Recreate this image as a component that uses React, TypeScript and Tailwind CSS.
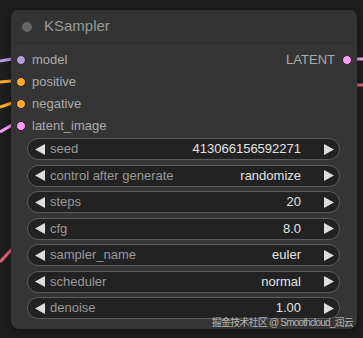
const INPUTS = [
  { name: "model", color: "bg-[#b39ddb]" },
  { name: "positive", color: "bg-[#ffa931]" },
  { name: "negative", color: "bg-[#ffa931]" },
  { name: "latent_image", color: "bg-[#ff9cf9]" },
];

const WIDGETS = [
  { label: "seed", value: "413066156592271" },
  { label: "control after generate", value: "randomize" },
  { label: "steps", value: "20" },
  { label: "cfg", value: "8.0" },
  { label: "sampler_name", value: "euler" },
  { label: "scheduler", value: "normal" },
  { label: "denoise", value: "1.00" },
];

function Arrow({ dir }: { dir: "left" | "right" }) {
  return (
    <svg width="10" height="11" viewBox="0 0 10 11" className="shrink-0">
      {dir === "left" ? <path d="M10 0 L0 5.5 L10 11 Z" fill="#dddddd" /> : <path d="M0 0 L10 5.5 L0 11 Z" fill="#dddddd" />}
    </svg>
  );
}

export default function App() {
  return (
    <div
      className="relative w-[363px] h-[338px] overflow-hidden bg-[#1e1e1e] pl-[11px] pt-[10px]"
      style={{ fontFamily: '"Liberation Sans", Arial, "Noto Sans CJK SC", sans-serif' }}
    >
      {/* links */}
      <svg className="absolute inset-0" width="363" height="338">
        <path d="M0 61 L12 59" stroke="#b39ddb" strokeWidth="3" fill="none" />
        <path d="M0 82 L12 81" stroke="#ffa931" strokeWidth="3" fill="none" />
        <path d="M0 107 L12 103" stroke="#ffa931" strokeWidth="3" fill="none" />
        <path d="M0 132 L12 125" stroke="#ff9cf9" strokeWidth="3" fill="none" />
        <path d="M0 262 L12 249" stroke="#e06070" strokeWidth="3" fill="none" />
        <path d="M350 59 L363 59" stroke="#ff9cf9" strokeWidth="3" fill="none" />
        <path d="M355 85 L363 85" stroke="#e06070" strokeWidth="3" fill="none" />
      </svg>

      <div className="relative w-[346px] h-[319px] rounded-[8px] bg-[#353535] shadow-[0_2px_6px_rgba(0,0,0,0.5)]">
        {/* title */}
        <div className="h-[34px] flex items-center rounded-t-[8px] bg-[#333333] border-b border-[#2e2e2e]">
          <span className="ml-[11px] w-[10px] h-[10px] rounded-full bg-[#666666]" />
          <span className="ml-[12px] text-[15px] text-[#999999]">KSampler</span>
        </div>

        {/* slots */}
        <div className="relative pt-[5px]">
          {INPUTS.map((s) => (
            <div key={s.name} className="h-[22px] flex items-center">
              <span className={`ml-[5px] w-[10px] h-[10px] rounded-full border border-[#222] ${s.color}`} />
              <span className="ml-[6px] text-[13px] text-[#aaaaaa]">{s.name}</span>
            </div>
          ))}
          <div className="absolute right-0 top-[5px] h-[22px] flex items-center">
            <span className="text-[13px] text-[#aaaaaa]">LATENT</span>
            <span className="ml-[7px] mr-[5px] w-[10px] h-[10px] rounded-full border border-[#222] bg-[#ff9cf9]" />
          </div>
        </div>

        {/* widgets */}
        <div className="flex flex-col gap-[4.5px] ml-[16px] mr-[17px] mt-[1px]">
          {WIDGETS.map((w) => (
            <div
              key={w.label}
              className="h-[22px] flex items-center rounded-full bg-[#222222] border border-[#5c5c5c] pl-[7px] pr-[5px]"
            >
              <Arrow dir="left" />
              <span className="ml-[5px] text-[13px] text-[#999999]">{w.label}</span>
              <span className="ml-auto text-[13px] text-[#e2e2e2]">{w.value}</span>
              <span className="ml-[23px] flex"><Arrow dir="right" /></span>
            </div>
          ))}
        </div>
      </div>

      <div className="absolute right-[10px] bottom-[8px] text-[10px] tracking-[-0.8px] text-[#d0d0d0] opacity-80">
        掘金技术社区 @ Smoothcloud_润云
      </div>
    </div>
  );
}
